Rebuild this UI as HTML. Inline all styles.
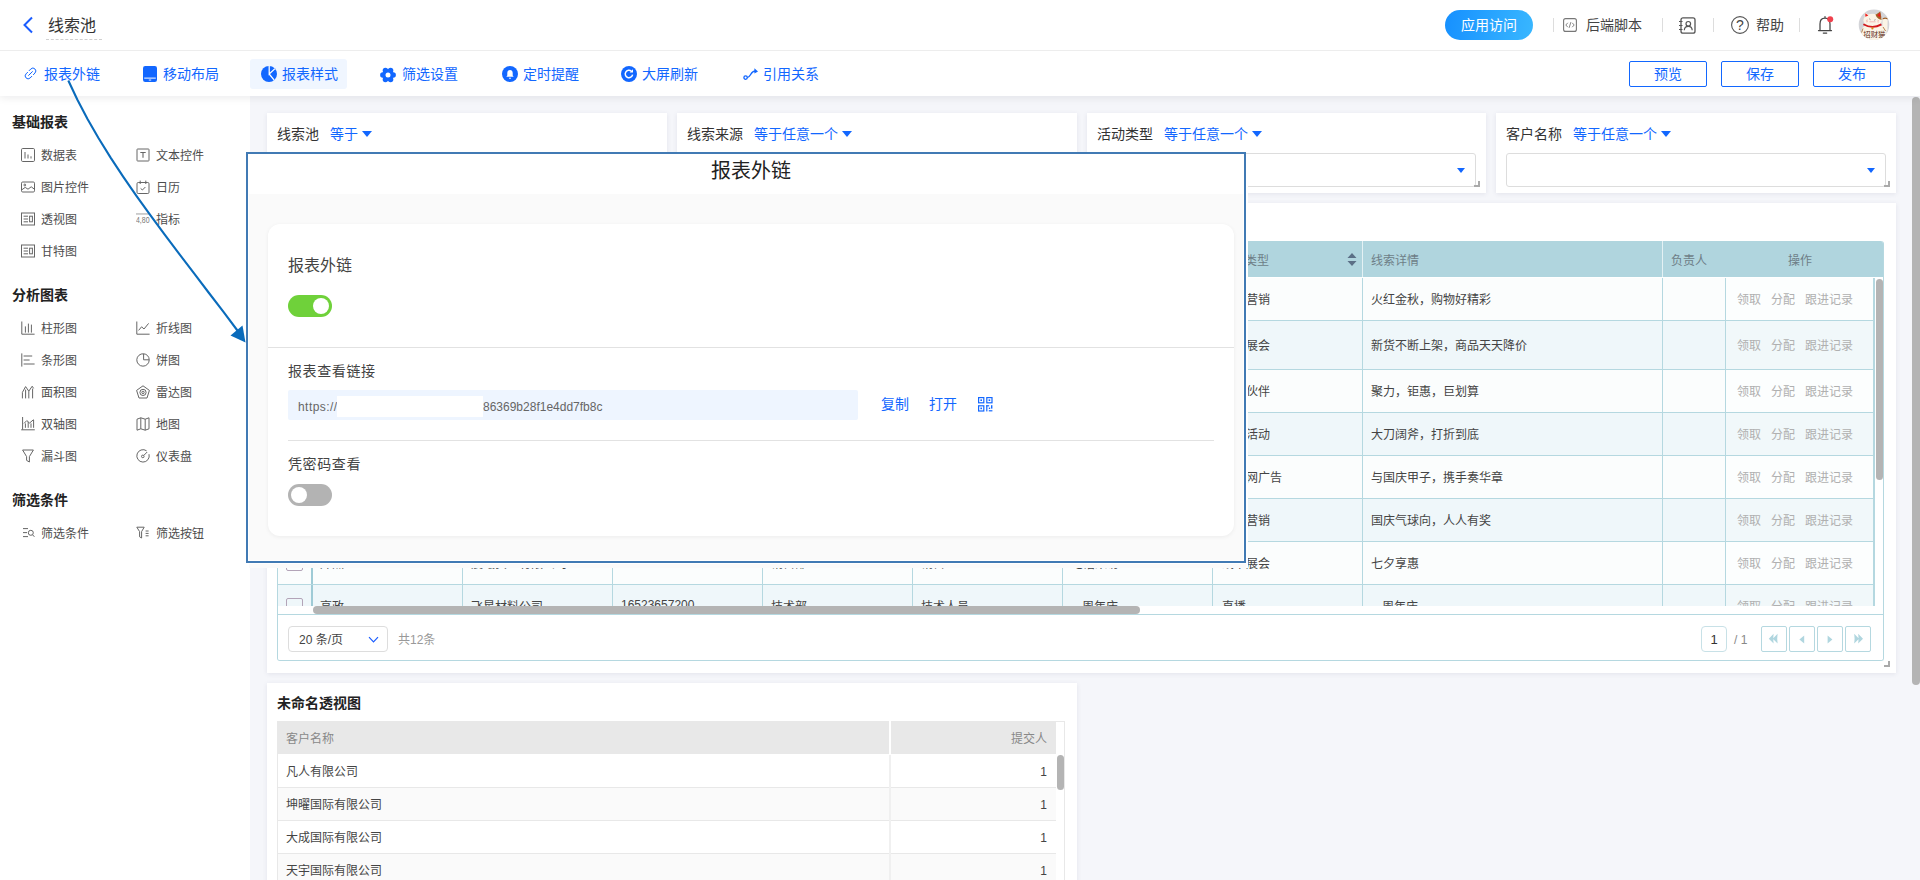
<!DOCTYPE html>
<html lang="zh-CN">
<head>
<meta charset="utf-8">
<title>线索池</title>
<style>
*{box-sizing:border-box;margin:0;padding:0}
html,body{width:1920px;height:880px;overflow:hidden;background:#f5f6fa;}
body{font-family:"Liberation Sans","Noto Sans CJK SC",sans-serif;font-size:12px;color:#333;position:relative}
.abs{position:absolute}
/* top header */
#hdr{position:absolute;left:0;top:0;width:1920px;height:51px;background:#fff;border-bottom:1px solid #ededed;z-index:5}
#hdr .title{position:absolute;left:48px;top:14px;font-size:16px;line-height:24px;color:#333}
#hdr .dash{position:absolute;left:46px;top:39px;width:56px;border-top:1px dashed #d0d0d0}
/* toolbar */
#tb{position:absolute;left:0;top:51px;width:1920px;height:45px;background:#fff;z-index:4;box-shadow:0 2px 8px rgba(0,0,30,.08)}
.tbi{position:absolute;top:0;height:45px;line-height:47px;font-size:14px;color:#1267ff;white-space:nowrap}
.tbi svg{position:absolute}
.btn{position:absolute;top:10px;width:78px;height:26px;border:1px solid #1267ff;border-radius:2px;color:#1267ff;font-size:14px;line-height:25px;text-align:center;background:#fff}
/* sidebar */
#side{position:absolute;left:0;top:96px;width:250px;height:784px;background:#fff;z-index:1}
.sh{position:absolute;left:12px;font-size:14px;font-weight:bold;color:#222;line-height:20px}
.si{position:absolute;font-size:12px;color:#4d4d4d;line-height:16px;white-space:nowrap}
.sico{position:absolute;width:14px;height:14px}
/* cards */
.card{position:absolute;background:#fff;box-shadow:0 1px 5px rgba(40,40,90,.09)}
.flabel{position:absolute;left:10px;top:11px;font-size:14px;line-height:20px;color:#333;white-space:nowrap}
.flabel b{font-weight:normal;color:#1267ff;margin-left:11px}
.fsel{position:absolute;left:10px;top:40px;height:34px;border:1px solid #ddd;border-radius:3px;background:#fff}
.tri{display:inline-block;width:0;height:0;border-left:5.5px solid transparent;border-right:5.5px solid transparent;border-top:6.5px solid #1267ff;vertical-align:middle;margin-left:4px;margin-top:-2px}
.rsz{position:absolute;width:6px;height:6px;border-right:2px solid #aaa;border-bottom:2px solid #aaa}

/* data table */
#dt{position:absolute;left:277px;top:241px;width:1607px;height:420px;border-radius:3px;border:1px solid #b5d8e0;border-top:none;background:#fff;overflow:hidden}
#dt .th{position:absolute;top:0;height:36px;background:#b0d5de;color:#6e7e87;font-size:12px;line-height:40px;white-space:nowrap}
#dt .row{position:absolute;left:0;width:1606px;border-bottom:1px solid #b5d8e0}
#dt .c{position:absolute;top:0;bottom:0;border-left:1px solid #b5d8e0;padding-left:8px;padding-bottom:2px;font-size:12px;color:#444;display:flex;align-items:center;white-space:nowrap;overflow:hidden}
#dt .c.op{color:#b0b0b0}
.pgb{position:absolute;top:385px;width:26px;height:26px;border:1px solid #b5d8e0;border-radius:2px;background:#fff}
/* pivot */
.pv-r{position:absolute;left:0;width:778px;height:33px;border-bottom:1px solid #e8e8e8;font-size:12px;line-height:35px;color:#444}
/* modal */
#modal{position:absolute;left:246px;top:152px;width:1000px;height:411px;border:2px solid #417ab4;background:#fafafa;z-index:10;box-shadow:inset 0 0 0 1px #fff}
.tg{position:absolute;width:44px;height:22px;border-radius:11px}
.tg i{position:absolute;top:3px;width:16px;height:16px;border-radius:50%;background:#fff}
</style>
</head>
<body>
<!-- HEADER -->
<div id="hdr">
  <svg class="abs" style="left:22px;top:16px" width="12" height="18" viewBox="0 0 12 18"><path d="M10 1.5 L2.5 9 L10 16.5" fill="none" stroke="#1a5cff" stroke-width="2"/></svg>
  <div class="title">线索池</div>
  <div class="dash"></div>
  <div class="abs" style="left:1445px;top:10px;width:88px;height:30px;border-radius:15px;background:linear-gradient(100deg,#1690ff,#39b7ff);color:#fff;font-size:14px;line-height:31px;text-align:center">应用访问</div>
  <div class="abs" style="left:1553px;top:18px;width:1px;height:14px;background:#ddd"></div>
  <svg class="abs" style="left:1563px;top:18px" width="14" height="14" viewBox="0 0 14 14"><rect x=".6" y=".6" width="12.8" height="12.8" rx="2" fill="none" stroke="#777" stroke-width="1.1"/><path d="M4.8 4.8 L2.8 7 L4.8 9.2 M9.2 4.8 L11.2 7 L9.2 9.2 M7.8 4.2 L6.2 9.8" fill="none" stroke="#777" stroke-width=".9"/></svg>
  <div class="abs" style="left:1586px;top:15px;font-size:14px;line-height:20px;color:#444">后端脚本</div>
  <div class="abs" style="left:1662px;top:18px;width:1px;height:14px;background:#ddd"></div>
  <svg class="abs" style="left:1678px;top:16px" width="19" height="19" viewBox="0 0 19 19"><rect x="3" y="1.8" width="14" height="15.4" rx="2" fill="none" stroke="#555" stroke-width="1.3"/><path d="M1 5.5 H4.5 M1 9.5 H4.5 M1 13.5 H4.5" stroke="#555" stroke-width="1.2"/><circle cx="10.3" cy="7.8" r="2.3" fill="none" stroke="#555" stroke-width="1.2"/><path d="M6.3 14.2 C6.5 11.2 8.4 10.4 10.3 10.4 C12.2 10.4 14 11.2 14.2 14.2" fill="none" stroke="#555" stroke-width="1.2"/></svg>
  <div class="abs" style="left:1713px;top:18px;width:1px;height:14px;background:#ddd"></div>
  <svg class="abs" style="left:1730px;top:15px" width="20" height="20" viewBox="0 0 20 20"><circle cx="10" cy="10" r="8.4" fill="none" stroke="#555" stroke-width="1.1"/><text x="10" y="15" font-size="14" text-anchor="middle" fill="#444" font-family="Liberation Sans, sans-serif">?</text></svg>
  <div class="abs" style="left:1756px;top:15px;font-size:14px;line-height:20px;color:#444">帮助</div>
  <div class="abs" style="left:1799px;top:18px;width:1px;height:14px;background:#ddd"></div>
  <svg class="abs" style="left:1815px;top:14px" width="22" height="22" viewBox="0 0 22 22"><path d="M3.5 16.5 H16.5 M5 16.5 V10 C5 6.5 7 4.2 10 4.2 C13 4.2 15 6.5 15 10 V16.5 M8.3 19 H11.7 M10 4.2 V2.6" fill="none" stroke="#444" stroke-width="1.25" stroke-linecap="round"/><circle cx="15.2" cy="5.2" r="3" fill="#f0414d"/></svg>
  <svg class="abs" style="left:1858px;top:9px" width="32" height="32" viewBox="0 0 32 32"><defs><clipPath id="avc"><circle cx="16" cy="15.8" r="15.3"/></clipPath></defs><circle cx="16" cy="15.8" r="15.3" fill="#d3d4d8"/><g clip-path="url(#avc)"><path d="M3.5 32 L3.5 22 Q4 17.5 8 16.5 L22 16.5 Q26 17 28.5 21 L29 32 Z" fill="#fbf4e6"/><path d="M24.4 21 L24.6 10.4 Q24.8 8.6 27 8.6 Q29.6 8.8 29.6 10.6 L29.4 21.5 Z" fill="#fbf4e6"/><path d="M24.6 9.6 Q27 7.4 29.6 9.4 L29.6 10.4 Q27 9 24.6 10.6 Z" fill="#9a5a22"/><path d="M6.6 8.4 L6.9 3.6 L11.4 6.2 Z" fill="#fbf4e6"/><path d="M17.8 5.8 L22.2 2.6 L23.4 8.6 Z" fill="#a5642a"/><ellipse cx="14.6" cy="11.4" rx="9.2" ry="6.6" fill="#fbf4e6"/><path d="M17.4 5.6 Q20 4.6 22.2 3.4 L23.6 11 Q20.6 10.6 18.6 8 Z" fill="#a5642a"/><path d="M7.3 7.8 L7.3 4.3 L10.4 6.4 Z" fill="#ee1c1c"/><path d="M19.2 6.6 L22 3.8 L22.4 8.2 Z" fill="#ee1c1c"/><path d="M5.4 15.2 Q14.4 20.4 23.4 15.4" fill="none" stroke="#d3191c" stroke-width="1.8"/><circle cx="14.4" cy="19.4" r="1.1" fill="#d88a14"/><path d="M11 9.6 L12.6 10.8 M17.6 10.6 L16 11.4" stroke="#777" stroke-width=".6"/><path d="M11.4 12.8 H17.6" stroke="#f2a0a0" stroke-width=".7"/><path d="M8.4 11.4 L9.6 11 M8.4 12.8 L9.6 12.6 M20.6 11.6 L19.6 11.2 M20.6 13 L19.6 12.8" stroke="#e55" stroke-width=".5"/><path d="M3.6 23.5 L5 19.5 M27.6 22 L25 18" stroke="#a5642a" stroke-width=".8"/><text x="16.4" y="27.6" font-size="7.4" text-anchor="middle" fill="#5b2c1b" font-family="Liberation Sans, Noto Sans CJK SC, sans-serif">招财猫</text></g></svg>
</div>
<!-- TOOLBAR -->
<div id="tb">
  <svg class="abs" style="left:24px;top:16px" width="13" height="13" viewBox="0 0 13 13"><g fill="none" stroke="#1267ff" stroke-width="1" stroke-linecap="round"><path d="M5.2 3.6 L6.9 1.9 A2.9 2.9 0 0 1 11 6 L9.4 7.7"/><path d="M7.8 9.3 L6.1 11 A2.9 2.9 0 0 1 2 6.9 L3.6 5.3"/><path d="M4.6 8.4 L8.4 4.6"/></g></svg>
  <div class="tbi" style="left:44px">报表外链</div>
  <svg class="abs" style="left:143px;top:15px" width="14" height="16" viewBox="0 0 14 16"><rect x="0" y="0" width="14" height="16" rx="2.2" fill="#1267ff"/><rect x="1.2" y="11.6" width="11.6" height="1" fill="#fff"/><rect x="5.8" y="13.6" width="2.4" height=".9" fill="#fff"/></svg>
  <div class="tbi" style="left:163px">移动布局</div>
  <div class="abs" style="left:250px;top:8px;width:97px;height:30px;background:#f0f6ff;border-radius:3px"></div>
  <svg class="abs" style="left:261px;top:15px" width="16" height="16" viewBox="0 0 16 16"><circle cx="8" cy="8" r="8" fill="#1267ff"/><path d="M8.2 0 L8.2 8 L14 2.6 M8.2 8 L13.2 14.2" fill="none" stroke="#fff" stroke-width="1.25"/></svg>
  <div class="tbi" style="left:282px">报表样式</div>
  <svg class="abs" style="left:380px;top:16px" width="16" height="16" viewBox="0 0 16 16"><g fill="#1267ff"><circle cx="8" cy="8" r="5.8"/><circle cx="13.20" cy="8.00" r="2.7"/><circle cx="10.60" cy="12.50" r="2.7"/><circle cx="5.40" cy="12.50" r="2.7"/><circle cx="2.80" cy="8.00" r="2.7"/><circle cx="5.40" cy="3.50" r="2.7"/><circle cx="10.60" cy="3.50" r="2.7"/></g><circle cx="8" cy="8" r="2.5" fill="#fff"/></svg>
  <div class="tbi" style="left:402px">筛选设置</div>
  <svg class="abs" style="left:502px;top:15px" width="16" height="16" viewBox="0 0 16 16"><circle cx="8" cy="8" r="8" fill="#1267ff"/><path d="M4.3 10.8 H11.7 L10.7 9.4 V7 C10.7 5.2 9.6 4 8 4 C6.4 4 5.3 5.2 5.3 7 V9.4 Z" fill="#fff"/><path d="M6.9 11.8 H9.1 A1.1 1.1 0 0 1 6.9 11.8Z" fill="#fff"/></svg>
  <div class="tbi" style="left:523px">定时提醒</div>
  <svg class="abs" style="left:621px;top:15px" width="16" height="16" viewBox="0 0 16 16"><circle cx="8" cy="8" r="8" fill="#1267ff"/><path d="M11.6 8.6 A3.7 3.7 0 1 1 10.4 5.2" fill="none" stroke="#fff" stroke-width="1.5"/><path d="M8.6 6.6 L12 6.6 L12 3.2 Z" fill="#fff"/></svg>
  <div class="tbi" style="left:642px">大屏刷新</div>
  <svg class="abs" style="left:743px;top:16px" width="16" height="14" viewBox="0 0 16 14"><g fill="none" stroke="#1267ff" stroke-width="1.3"><circle cx="2.6" cy="10.6" r="1.7"/><path d="M4.2 10.6 C8 10.6 7 4 12.6 4"/></g><path d="M11.4 1.2 L15 4.6 L11.4 6.4 Z" fill="#1267ff"/></svg>
  <div class="tbi" style="left:763px">引用关系</div>
  <div class="btn" style="left:1629px">预览</div>
  <div class="btn" style="left:1721px">保存</div>
  <div class="btn" style="left:1813px">发布</div>
</div>
<!-- SIDEBAR -->
<div id="side">
<div class="sh" style="top:16px">基础报表</div>
<svg class="sico" style="left:21px;top:52px" width="14" height="14" viewBox="0 0 14 14"><g fill="none" stroke="#666" stroke-width="1"><rect x=".5" y=".5" width="13" height="13" rx="1.2"/><path d="M4 4 V10.5 M7 6.5 V10.5 M10 8.3 V10.5"/></g></svg>
<div class="si" style="left:41px;top:52px">数据表</div>
<svg class="sico" style="left:136px;top:52px" width="14" height="14" viewBox="0 0 14 14"><g fill="none" stroke="#666" stroke-width="1"><rect x="1" y="1" width="12" height="12" rx=".6"/><path d="M4.3 4.5 H9.7 M7 4.5 V9.8" stroke-width="1.1"/></g></svg>
<div class="si" style="left:156px;top:52px">文本控件</div>
<svg class="sico" style="left:21px;top:84px" width="14" height="14" viewBox="0 0 14 14"><g fill="none" stroke="#666" stroke-width="1"><rect x=".5" y="2" width="13" height="10" rx="1.2"/><circle cx="3.8" cy="5" r=".9"/><path d="M.8 9.8 L4.2 7.4 L7 9.2 L10.2 6.8 L13.2 9"/></g></svg>
<div class="si" style="left:41px;top:84px">图片控件</div>
<svg class="sico" style="left:136px;top:84px" width="14" height="14" viewBox="0 0 14 14"><g fill="none" stroke="#666" stroke-width="1"><rect x="1" y="2.5" width="12" height="11" rx="1.2"/><path d="M4.2 .6 V4 M9.8 .6 V4 M4.6 8.4 L6.4 10 L9.4 7"/></g></svg>
<div class="si" style="left:156px;top:84px">日历</div>
<svg class="sico" style="left:21px;top:116px" width="14" height="14" viewBox="0 0 14 14"><g fill="none" stroke="#666" stroke-width="1"><rect x=".5" y="1" width="13" height="12"/><path d="M2.6 4.2 H7 M2.6 7 H7 M2.6 9.8 H7"/><rect x="8.6" y="4.2" width="2.8" height="5.6"/></g></svg>
<div class="si" style="left:41px;top:116px">透视图</div>
<svg class="sico" style="left:136px;top:116px" width="15" height="14" viewBox="0 0 15 14"><path d="M0 1.6 H14.5" stroke="#999" stroke-width="1"/><text x="0" y="11.6" font-size="9.6" fill="#777" font-family="Liberation Sans, sans-serif" textLength="14.5" lengthAdjust="spacingAndGlyphs">4,80</text></svg>
<div class="si" style="left:156px;top:116px">指标</div>
<svg class="sico" style="left:21px;top:148px" width="14" height="14" viewBox="0 0 14 14"><g fill="none" stroke="#666" stroke-width="1"><rect x=".5" y="1" width="13" height="12"/><path d="M2.6 4.2 H7 M2.6 7 H7 M2.6 9.8 H7"/><rect x="8.6" y="4.2" width="2.8" height="5.6"/></g></svg>
<div class="si" style="left:41px;top:148px">甘特图</div>
<div class="sh" style="top:189px">分析图表</div>
<svg class="sico" style="left:21px;top:225px" width="14" height="14" viewBox="0 0 14 14"><g fill="none" stroke="#666" stroke-width="1"><path d="M.8 .5 V13.2 H13.6 M4.4 5.4 V11.6 M7.4 2.6 V11.6 M10.4 3.6 V11.6"/></g></svg>
<div class="si" style="left:41px;top:225px">柱形图</div>
<svg class="sico" style="left:136px;top:225px" width="14" height="14" viewBox="0 0 14 14"><g fill="none" stroke="#666" stroke-width="1"><path d="M.8 .5 V13.2 H13.6 M2.6 9.4 L5.6 5.8 L8 8 L12.6 2.4"/></g></svg>
<div class="si" style="left:156px;top:225px">折线图</div>
<svg class="sico" style="left:21px;top:257px" width="14" height="14" viewBox="0 0 14 14"><g fill="none" stroke="#666" stroke-width="1"><path d="M.8 .4 V13.6 M2.6 3 H11.2 M2.6 7 H8.6 M2.6 11 H13.6"/></g></svg>
<div class="si" style="left:41px;top:257px">条形图</div>
<svg class="sico" style="left:136px;top:257px" width="14" height="14" viewBox="0 0 14 14"><g fill="none" stroke="#666" stroke-width="1"><path d="M7.6 .8 A6.2 6.2 0 1 0 13.2 6.8"/><path d="M7.6 .8 V6.8 H13.2 A5.9 5.9 0 0 0 7.6 .8Z"/></g></svg>
<div class="si" style="left:156px;top:257px">饼图</div>
<svg class="sico" style="left:21px;top:289px" width="14" height="14" viewBox="0 0 14 14"><g fill="none" stroke="#666" stroke-width="1"><path d="M1.4 7.4 L4.6 1.6 L7.8 6.2 L11.2 1.2 L12.6 3.4 M1.4 7.4 V13.4 M4.6 4.6 V13.4 M7.8 6.2 V13.4 M11.6 3.6 V13.4"/></g></svg>
<div class="si" style="left:41px;top:289px">面积图</div>
<svg class="sico" style="left:136px;top:289px" width="14" height="14" viewBox="0 0 14 14"><g fill="none" stroke="#666" stroke-width="1"><path d="M7 .8 L13.4 5.4 L11 13 H3 L.6 5.4 Z"/><circle cx="7" cy="7.4" r="3.1"/><circle cx="7" cy="7.4" r="1.2"/></g></svg>
<div class="si" style="left:156px;top:289px">雷达图</div>
<svg class="sico" style="left:21px;top:321px" width="14" height="14" viewBox="0 0 14 14"><g fill="none" stroke="#666" stroke-width="1"><path d="M1.6 0 V12.6 M.2 12.8 H13.8 M4.4 6.4 V10.8 M7.2 5 V10.8 M10 6.4 V10.8 M12.6 3 V10.8 M3 6.4 L5.8 3.6 L8.6 6 L12.6 2.6"/></g></svg>
<div class="si" style="left:41px;top:321px">双轴图</div>
<svg class="sico" style="left:136px;top:321px" width="14" height="14" viewBox="0 0 14 14"><g fill="none" stroke="#666" stroke-width="1"><path d="M1 2.2 L4.8 .8 L9.2 2.2 L13 .8 V11.8 L9.2 13.2 L4.8 11.8 L1 13.2 Z M4.8 .8 V11.8 M9.2 2.2 V13.2" stroke-linejoin="round"/></g></svg>
<div class="si" style="left:156px;top:321px">地图</div>
<svg class="sico" style="left:21px;top:353px" width="14" height="14" viewBox="0 0 14 14"><g fill="none" stroke="#666" stroke-width="1"><path d="M1.6 1 H12.4 L8.4 7.6 V13 L5.6 11.4 V7.6 Z" stroke-linejoin="round"/></g></svg>
<div class="si" style="left:41px;top:353px">漏斗图</div>
<svg class="sico" style="left:136px;top:353px" width="14" height="14" viewBox="0 0 14 14"><g fill="none" stroke="#666" stroke-width="1"><path d="M10.6 1.8 A6.2 6.2 0 1 0 13 5.2"/><circle cx="6.8" cy="7.4" r="1.3"/><path d="M7.8 6.4 L11.2 3"/></g></svg>
<div class="si" style="left:156px;top:353px">仪表盘</div>
<div class="sh" style="top:394px">筛选条件</div>
<svg class="sico" style="left:21px;top:430px" width="14" height="14" viewBox="0 0 14 14"><g fill="none" stroke="#666" stroke-width="1"><path d="M2 2.6 H7 M2 6.6 H6 M2 10.6 H7"/><circle cx="9.8" cy="6.8" r="2.5"/><path d="M11.6 8.8 L13.4 10.8"/></g></svg>
<div class="si" style="left:41px;top:430px">筛选条件</div>
<svg class="sico" style="left:136px;top:430px" width="14" height="14" viewBox="0 0 14 14"><g fill="none" stroke="#666" stroke-width="1"><path d="M.8 1.2 H8.2 L5.6 5.6 V12 L3.6 10.8 V5.6 Z" stroke-linejoin="round"/><path d="M9.6 5 H12.6 M9.6 7.4 H12.6 M9.6 9.8 H12.6"/></g></svg>
<div class="si" style="left:156px;top:430px">筛选按钮</div>
</div>
<!-- MAIN -->
<div id="main">
<!--MAIN-START-->
<div class="card" style="left:267px;top:113px;width:400px;height:80px"><div class="flabel">线索池<b>等于</b><span class="tri"></span></div><div class="fsel" style="width:380px"><span class="abs" style="right:10px;top:14px;width:0;height:0;border-left:4.5px solid transparent;border-right:4.5px solid transparent;border-top:5px solid #1267ff"></span></div><div class="rsz" style="right:6px;bottom:6px"></div></div>
<div class="card" style="left:677px;top:113px;width:400px;height:80px"><div class="flabel">线索来源<b>等于任意一个</b><span class="tri"></span></div><div class="fsel" style="width:380px"><span class="abs" style="right:10px;top:14px;width:0;height:0;border-left:4.5px solid transparent;border-right:4.5px solid transparent;border-top:5px solid #1267ff"></span></div><div class="rsz" style="right:6px;bottom:6px"></div></div>
<div class="card" style="left:1087px;top:113px;width:399px;height:80px"><div class="flabel">活动类型<b>等于任意一个</b><span class="tri"></span></div><div class="fsel" style="width:379px"><span class="abs" style="right:10px;top:14px;width:0;height:0;border-left:4.5px solid transparent;border-right:4.5px solid transparent;border-top:5px solid #1267ff"></span></div><div class="rsz" style="right:6px;bottom:6px"></div></div>
<div class="card" style="left:1496px;top:113px;width:400px;height:80px"><div class="flabel">客户名称<b>等于任意一个</b><span class="tri"></span></div><div class="fsel" style="width:380px"><span class="abs" style="right:10px;top:14px;width:0;height:0;border-left:4.5px solid transparent;border-right:4.5px solid transparent;border-top:5px solid #1267ff"></span></div><div class="rsz" style="right:6px;bottom:6px"></div></div>
<div class="card" style="left:267px;top:203px;width:1629px;height:470px"></div>
<div id="dt">
<div class="th" style="left:0;width:1606px;border-radius:3px 3px 0 0"></div>
<div class="th" style="left:34px;width:150px;padding-left:8px;border-left:1px solid #e4f1f4">姓名</div>
<div class="th" style="left:184px;width:150px;padding-left:8px;border-left:1px solid #e4f1f4">客户名称</div>
<div class="th" style="left:334px;width:150px;padding-left:8px;border-left:1px solid #e4f1f4">手机</div>
<div class="th" style="left:484px;width:150px;padding-left:8px;border-left:1px solid #e4f1f4">部门</div>
<div class="th" style="left:634px;width:150px;padding-left:8px;border-left:1px solid #e4f1f4">职位</div>
<div class="th" style="left:784px;width:150px;padding-left:8px;border-left:1px solid #e4f1f4">线索来源</div>
<div class="th" style="left:934px;width:150px;padding-left:8px;border-left:1px solid #e4f1f4">活动类型</div>
<div class="th" style="left:1084px;width:300px;padding-left:8px;border-left:1px solid #e4f1f4">线索详情</div>
<div class="th" style="left:1384px;width:63px;padding-left:8px;border-left:1px solid #e4f1f4">负责人</div>
<svg class="abs" style="left:1069px;top:12px" width="10" height="13" viewBox="0 0 10 13"><path d="M5 0 L9.5 5 H.5Z M5 13 L9.5 8 H.5Z" fill="#5b6f86"/></svg>
<div class="th" style="left:1447px;width:150px;text-align:center">操作</div>
<div class="row" style="top:37px;height:43px;background:#fbfdfd"><div class="c" style="left:0;width:35px;border-left:none;padding-left:8px;border-right:2px solid #9fcbd6"><span style="display:block;width:17px;height:16px;margin-top:2px;border:1px solid #b3a4b8;border-radius:2px"></span></div><div class="c" style="left:34px;width:150px;padding-left:8px;border-left:none;"></div><div class="c" style="left:184px;width:150px;padding-left:8px;"></div><div class="c" style="left:334px;width:150px;padding-left:8px;"></div><div class="c" style="left:484px;width:150px;padding-left:8px;"></div><div class="c" style="left:634px;width:150px;padding-left:8px;"></div><div class="c" style="left:784px;width:150px;padding-left:8px;"></div><div class="c" style="left:934px;width:150px;padding-left:9px;">内容营销</div><div class="c" style="left:1084px;width:300px;padding-left:8px;">火红金秋，购物好精彩</div><div class="c" style="left:1384px;width:63px"></div><div class="c op" style="left:1447px;width:148px;padding-left:11px;background:#fcfefe"><span>领取</span><span style="margin-left:10px">分配</span><span style="margin-left:10px">跟进记录</span></div></div>
<div class="row" style="top:80px;height:49px;background:#eff7fa"><div class="c" style="left:0;width:35px;border-left:none;padding-left:8px;border-right:2px solid #9fcbd6"><span style="display:block;width:17px;height:16px;margin-top:2px;border:1px solid #b3a4b8;border-radius:2px"></span></div><div class="c" style="left:34px;width:150px;padding-left:8px;border-left:none;"></div><div class="c" style="left:184px;width:150px;padding-left:8px;"></div><div class="c" style="left:334px;width:150px;padding-left:8px;"></div><div class="c" style="left:484px;width:150px;padding-left:8px;"></div><div class="c" style="left:634px;width:150px;padding-left:8px;"></div><div class="c" style="left:784px;width:150px;padding-left:8px;"></div><div class="c" style="left:934px;width:150px;padding-left:9px;">线下展会</div><div class="c" style="left:1084px;width:300px;padding-left:8px;">新货不断上架，商品天天降价</div><div class="c" style="left:1384px;width:63px"></div><div class="c op" style="left:1447px;width:148px;padding-left:11px;background:#f1f8fa"><span>领取</span><span style="margin-left:10px">分配</span><span style="margin-left:10px">跟进记录</span></div></div>
<div class="row" style="top:129px;height:43px;background:#fbfdfd"><div class="c" style="left:0;width:35px;border-left:none;padding-left:8px;border-right:2px solid #9fcbd6"><span style="display:block;width:17px;height:16px;margin-top:2px;border:1px solid #b3a4b8;border-radius:2px"></span></div><div class="c" style="left:34px;width:150px;padding-left:8px;border-left:none;"></div><div class="c" style="left:184px;width:150px;padding-left:8px;"></div><div class="c" style="left:334px;width:150px;padding-left:8px;"></div><div class="c" style="left:484px;width:150px;padding-left:8px;"></div><div class="c" style="left:634px;width:150px;padding-left:8px;"></div><div class="c" style="left:784px;width:150px;padding-left:8px;"></div><div class="c" style="left:934px;width:150px;padding-left:9px;">合作伙伴</div><div class="c" style="left:1084px;width:300px;padding-left:8px;">聚力，钜惠，巨划算</div><div class="c" style="left:1384px;width:63px"></div><div class="c op" style="left:1447px;width:148px;padding-left:11px;background:#fcfefe"><span>领取</span><span style="margin-left:10px">分配</span><span style="margin-left:10px">跟进记录</span></div></div>
<div class="row" style="top:172px;height:43px;background:#eff7fa"><div class="c" style="left:0;width:35px;border-left:none;padding-left:8px;border-right:2px solid #9fcbd6"><span style="display:block;width:17px;height:16px;margin-top:2px;border:1px solid #b3a4b8;border-radius:2px"></span></div><div class="c" style="left:34px;width:150px;padding-left:8px;border-left:none;"></div><div class="c" style="left:184px;width:150px;padding-left:8px;"></div><div class="c" style="left:334px;width:150px;padding-left:8px;"></div><div class="c" style="left:484px;width:150px;padding-left:8px;"></div><div class="c" style="left:634px;width:150px;padding-left:8px;"></div><div class="c" style="left:784px;width:150px;padding-left:8px;"></div><div class="c" style="left:934px;width:150px;padding-left:9px;">线下活动</div><div class="c" style="left:1084px;width:300px;padding-left:8px;">大刀阔斧，打折到底</div><div class="c" style="left:1384px;width:63px"></div><div class="c op" style="left:1447px;width:148px;padding-left:11px;background:#f1f8fa"><span>领取</span><span style="margin-left:10px">分配</span><span style="margin-left:10px">跟进记录</span></div></div>
<div class="row" style="top:215px;height:43px;background:#fbfdfd"><div class="c" style="left:0;width:35px;border-left:none;padding-left:8px;border-right:2px solid #9fcbd6"><span style="display:block;width:17px;height:16px;margin-top:2px;border:1px solid #b3a4b8;border-radius:2px"></span></div><div class="c" style="left:34px;width:150px;padding-left:8px;border-left:none;"></div><div class="c" style="left:184px;width:150px;padding-left:8px;"></div><div class="c" style="left:334px;width:150px;padding-left:8px;"></div><div class="c" style="left:484px;width:150px;padding-left:8px;"></div><div class="c" style="left:634px;width:150px;padding-left:8px;"></div><div class="c" style="left:784px;width:150px;padding-left:8px;"></div><div class="c" style="left:934px;width:150px;padding-left:9px;">互联网广告</div><div class="c" style="left:1084px;width:300px;padding-left:8px;">与国庆甲子，携手奏华章</div><div class="c" style="left:1384px;width:63px"></div><div class="c op" style="left:1447px;width:148px;padding-left:11px;background:#fcfefe"><span>领取</span><span style="margin-left:10px">分配</span><span style="margin-left:10px">跟进记录</span></div></div>
<div class="row" style="top:258px;height:43px;background:#eff7fa"><div class="c" style="left:0;width:35px;border-left:none;padding-left:8px;border-right:2px solid #9fcbd6"><span style="display:block;width:17px;height:16px;margin-top:2px;border:1px solid #b3a4b8;border-radius:2px"></span></div><div class="c" style="left:34px;width:150px;padding-left:8px;border-left:none;"></div><div class="c" style="left:184px;width:150px;padding-left:8px;"></div><div class="c" style="left:334px;width:150px;padding-left:8px;"></div><div class="c" style="left:484px;width:150px;padding-left:8px;"></div><div class="c" style="left:634px;width:150px;padding-left:8px;"></div><div class="c" style="left:784px;width:150px;padding-left:8px;"></div><div class="c" style="left:934px;width:150px;padding-left:9px;">内容营销</div><div class="c" style="left:1084px;width:300px;padding-left:8px;">国庆气球向，人人有奖</div><div class="c" style="left:1384px;width:63px"></div><div class="c op" style="left:1447px;width:148px;padding-left:11px;background:#f1f8fa"><span>领取</span><span style="margin-left:10px">分配</span><span style="margin-left:10px">跟进记录</span></div></div>
<div class="row" style="top:301px;height:43px;background:#fbfdfd"><div class="c" style="left:0;width:35px;border-left:none;padding-left:8px;border-right:2px solid #9fcbd6"><span style="display:block;width:17px;height:16px;margin-top:2px;border:1px solid #b3a4b8;border-radius:2px"></span></div><div class="c" style="left:34px;width:150px;padding-left:8px;border-left:none;">郑杰</div><div class="c" style="left:184px;width:150px;padding-left:8px;">晨曦实业有限公司</div><div class="c" style="left:334px;width:150px;padding-left:8px;"></div><div class="c" style="left:484px;width:150px;padding-left:8px;">销售部</div><div class="c" style="left:634px;width:150px;padding-left:8px;">销售</div><div class="c" style="left:784px;width:150px;padding-left:8px;">电话来访</div><div class="c" style="left:934px;width:150px;padding-left:9px;">线下展会</div><div class="c" style="left:1084px;width:300px;padding-left:8px;">七夕享惠</div><div class="c" style="left:1384px;width:63px"></div><div class="c op" style="left:1447px;width:148px;padding-left:11px;background:#fcfefe"><span>领取</span><span style="margin-left:10px">分配</span><span style="margin-left:10px">跟进记录</span></div></div>
<div class="row" style="top:344px;height:43px;background:#eff7fa"><div class="c" style="left:0;width:35px;border-left:none;padding-left:8px;border-right:2px solid #9fcbd6"><span style="display:block;width:17px;height:16px;margin-top:2px;border:1px solid #b3a4b8;border-radius:2px"></span></div><div class="c" style="left:34px;width:150px;padding-left:8px;border-left:none;">高政</div><div class="c" style="left:184px;width:150px;padding-left:8px;">飞星材料公司</div><div class="c" style="left:334px;width:150px;padding-left:8px;">16523657200</div><div class="c" style="left:484px;width:150px;padding-left:8px;">技术部</div><div class="c" style="left:634px;width:150px;padding-left:8px;">技术人员</div><div class="c" style="left:784px;width:150px;padding-left:19px;">周年庆</div><div class="c" style="left:934px;width:150px;padding-left:9px;">直播</div><div class="c" style="left:1084px;width:300px;padding-left:19px;">周年庆</div><div class="c" style="left:1384px;width:63px"></div><div class="c op" style="left:1447px;width:148px;padding-left:11px;background:#f1f8fa"><span>领取</span><span style="margin-left:10px">分配</span><span style="margin-left:10px">跟进记录</span></div></div>
<div class="abs" style="left:1595px;top:37px;width:10px;height:328px;background:#fff;border-left:2px solid #b5d8e0"></div>
<div class="abs" style="left:1598px;top:38px;width:7px;height:201px;border-radius:4px;background:#b4b4b4"></div>
<div class="abs" style="left:0;top:365px;width:1606px;height:9px;background:#fff;border-bottom:1px solid #b5d8e0"></div>
<div class="abs" style="left:35px;top:365px;width:827px;height:8px;border-radius:4px;background:#b4b4b4"></div>
<div class="abs" style="left:0;top:374px;width:1606px;height:46px;background:#fff"></div>
<div class="abs" style="left:10px;top:385px;width:100px;height:26px;border:1px solid #ddd;border-radius:4px;font-size:12px;line-height:26px;padding-left:10px;color:#444;background:#fff">20 条/页<svg class="abs" style="left:79px;top:9px" width="11" height="8" viewBox="0 0 11 8"><path d="M1 1.2 L5.5 5.8 L10 1.2" fill="none" stroke="#1a5cff" stroke-width="1.2"/></svg></div>
<div class="abs" style="left:120px;top:385px;font-size:12px;line-height:28px;color:#999">共12条</div>
<div class="abs" style="left:1423px;top:385px;width:26px;height:26px;border:1px solid #c8e1e7;border-radius:4px;font-size:13px;line-height:26px;text-align:center;color:#333;background:#fff">1</div>
<div class="abs" style="left:1456px;top:385px;font-size:12px;line-height:28px;color:#888">/ 1</div>
<div class="pgb" style="left:1483px"><svg class="abs" style="left:5px;top:5px" width="14" height="14" viewBox="0 0 14 14"><path d="M6.6 1.8 L1.8 6.7 L6.6 11.6 L6.2 6.7 Z M10.6 1.8 L5.8 6.7 L10.6 11.6 L10.2 6.7 Z" fill="#b0d6df"/></svg></div>
<div class="pgb" style="left:1511px"><svg class="abs" style="left:5px;top:5px" width="14" height="14" viewBox="0 0 14 14"><path d="M9.2 3.6 L4.4 7.6 L9.2 11.6 Z" fill="#b0d6df"/></svg></div>
<div class="pgb" style="left:1539px"><svg class="abs" style="left:5px;top:5px" width="14" height="14" viewBox="0 0 14 14"><path d="M4.6 3.6 L9.4 7.6 L4.6 11.6 Z" fill="#b0d6df"/></svg></div>
<div class="pgb" style="left:1567px"><svg class="abs" style="left:5px;top:5px" width="14" height="14" viewBox="0 0 14 14"><path d="M3.2 1.8 L8 6.7 L3.2 11.6 L3.6 6.7 Z M7.2 1.8 L12 6.7 L7.2 11.6 L7.6 6.7 Z" fill="#b0d6df"/></svg></div>
</div>
<div class="rsz" style="left:1884px;top:661px"></div>
<div class="card" style="left:267px;top:683px;width:810px;height:210px">
<div class="abs" style="left:10px;top:10px;font-size:14px;font-weight:bold;line-height:20px;color:#222">未命名透视图</div>
<div class="abs" style="left:10px;top:38px;width:788px;height:180px;border:1px solid #e8e8e8;border-top:none;background:#fff">
<div class="abs" style="left:0;top:0;width:778px;height:33px;background:#e8e8e8;color:#888;font-size:12px;line-height:37px"><span class="abs" style="left:8px">客户名称</span><span class="abs" style="right:9px">提交人</span><span class="abs" style="left:611px;top:0;width:2px;height:33px;background:#fff"></span></div>
<div class="pv-r" style="top:34px;background:#fff"><span class="abs" style="left:8px">凡人有限公司</span><span class="abs" style="right:9px">1</span><span class="abs" style="left:611px;top:0;width:2px;height:33px;background:#f0f0f0"></span></div>
<div class="pv-r" style="top:67px;background:#fafafa"><span class="abs" style="left:8px">坤曜国际有限公司</span><span class="abs" style="right:9px">1</span><span class="abs" style="left:611px;top:0;width:2px;height:33px;background:#f0f0f0"></span></div>
<div class="pv-r" style="top:100px;background:#fff"><span class="abs" style="left:8px">大成国际有限公司</span><span class="abs" style="right:9px">1</span><span class="abs" style="left:611px;top:0;width:2px;height:33px;background:#f0f0f0"></span></div>
<div class="pv-r" style="top:133px;background:#fafafa"><span class="abs" style="left:8px">天宇国际有限公司</span><span class="abs" style="right:9px">1</span><span class="abs" style="left:611px;top:0;width:2px;height:33px;background:#f0f0f0"></span></div>
<div class="abs" style="left:779px;top:34px;width:7px;height:35px;border-radius:4px;background:#b4b4b4"></div>
<div class="abs" style="left:778px;top:0;width:9px;height:1px;background:#e8e8e8"></div>
</div></div>
<div class="abs" style="left:1912px;top:97px;width:8px;height:588px;border-radius:4px;background:#b4b4b4"></div>
<div class="abs" style="left:249px;top:563px;width:997px;height:5px;background:#fafafa;border-top:1px solid #fff;z-index:9"></div>
<div class="abs" style="left:1246px;top:154px;width:2px;height:414px;background:#fff;z-index:9"></div>
<div id="modal">
<div class="abs" style="left:0;top:0;width:996px;height:40px;background:#fff"></div>
<div class="abs" style="left:0;top:3px;width:1006px;text-align:center;font-size:20px;line-height:28px;color:#222">报表外链</div>
<div class="abs" style="left:20px;top:70px;width:966px;height:312px;border-radius:12px;background:#fff;box-shadow:0 1px 4px rgba(0,0,0,.06)">
<div class="abs" style="left:20px;top:30px;font-size:16px;line-height:24px;color:#444">报表外链</div>
<div class="tg" style="left:20px;top:71px;background:#6fd13a"><i style="left:25px"></i></div>
<div class="abs" style="left:0;top:123px;width:966px;height:1px;background:#e2e2e2"></div>
<div class="abs" style="left:20px;top:137px;font-size:14px;letter-spacing:.6px;line-height:20px;color:#444">报表查看链接</div>
<div class="abs" style="left:20px;top:166px;width:570px;height:30px;background:#eef5ff;border-radius:2px;font-size:12px;line-height:35px;color:#666"><span class="abs" style="left:10px;letter-spacing:.45px">https://</span><span class="abs" style="left:49px;top:6px;width:146px;height:21px;background:#fff"></span><span class="abs" style="left:195px">86369b28f1e4dd7fb8c</span></div>
<div class="abs" style="left:613px;top:170px;font-size:14px;line-height:20px;color:#1267ff">复制</div>
<div class="abs" style="left:661px;top:170px;font-size:14px;line-height:20px;color:#1267ff">打开</div>
<svg class="abs" style="left:710px;top:173px" width="15" height="15" viewBox="0 0 15 15"><g fill="none" stroke="#1267ff" stroke-width="1.2"><rect x=".6" y=".6" width="5.2" height="5.2"/><rect x="8.8" y=".6" width="5.2" height="5.2"/><rect x=".6" y="8.8" width="5.2" height="5.2"/></g><g fill="#1267ff"><rect x="2.4" y="2.4" width="1.6" height="1.6"/><rect x="10.6" y="2.4" width="1.6" height="1.6"/><rect x="2.4" y="10.6" width="1.6" height="1.6"/><rect x="8.2" y="8.2" width="3" height="1.2"/><rect x="8.2" y="8.2" width="1.2" height="6.2"/><rect x="10.8" y="10.6" width="1.4" height="1.4"/><rect x="13" y="8.2" width="1.4" height="3.4"/><rect x="10.8" y="13.2" width="3.6" height="1.2"/></g></svg>
<div class="abs" style="left:20px;top:216px;width:926px;height:1px;background:#e2e2e2"></div>
<div class="abs" style="left:20px;top:230px;font-size:14px;letter-spacing:.6px;line-height:20px;color:#444">凭密码查看</div>
<div class="tg" style="left:20px;top:260px;background:#b3b3b3"><i style="left:3px"></i></div>
</div></div>
<svg class="abs" style="left:0;top:0;z-index:20;pointer-events:none" width="260" height="360" viewBox="0 0 260 360"><path d="M68.3 80.5 L77.4 99.8 L87.5 119 L98.6 138.3 L110.6 157.6 L123.3 176.8 L136.6 196.1 L150.5 215.4 L164.7 234.7 L179.2 253.9 L193.9 273.2 L208.6 292.5 L223.3 311.7 L237.8 331" stroke-linejoin="round" fill="none" stroke="#0a6bbb" stroke-width="2.1"/><path d="M245.5 342.5 L230.5 335.5 L242.5 325.5 Z" fill="#0a6bbb"/></svg>
<!--MAIN-END-->
</div>
</body>
</html>
